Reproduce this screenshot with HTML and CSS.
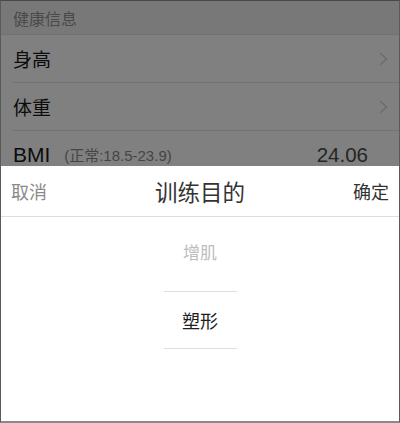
FILE: index.html
```html
<!DOCTYPE html>
<html lang="zh-CN">
<head>
<meta charset="utf-8">
<title>训练目的</title>
<link rel="stylesheet" href="styles.css">
</head>
<body>
<div class="frame">
  <div class="page">
    <div class="section-head">健康信息</div>
    <div class="rows">
      <div class="row">
        <span class="label">身高</span>
        <svg class="chev" width="9" height="14" viewBox="0 0 9 14"><path d="M1 1 L7.5 7 L1 13" fill="none" stroke="#6b6b6b" stroke-width="1.3"/></svg>
      </div>
      <div class="row">
        <span class="label">体重</span>
        <svg class="chev" width="9" height="14" viewBox="0 0 9 14"><path d="M1 1 L7.5 7 L1 13" fill="none" stroke="#6b6b6b" stroke-width="1.3"/></svg>
      </div>
      <div class="row last">
        <span class="label latin">BMI <span class="note">(正常:18.5-23.9)</span></span>
        <span class="value">24.06</span>
      </div>
    </div>
  </div>
  <div class="sheet">
    <div class="sheet-head">
      <span class="cancel">取消</span>
      <span class="title">训练目的</span>
      <span class="ok">确定</span>
    </div>
    <div class="picker">
      <div class="opt dim">增肌</div>
      <div class="opt sel">塑形</div>
    </div>
  </div>
</div>
</body>
</html>
```

FILE: styles.css
```css
html, body {
  margin: 0;
  padding: 0;
  background: #ffffff;
}
body {
  font-family: "Noto Sans CJK SC", "Liberation Sans", sans-serif;
}
.frame {
  width: 400px;
  height: 423px;
  box-sizing: border-box;
  border-top: 1px solid #4a4a4a;
  border-left: 1px solid #5a5a5a;
  border-right: 1px solid #5a5a5a;
  border-bottom: 2px solid #8a8a8a;
  display: flex;
  flex-direction: column;
  overflow: hidden;
}
.page {
  height: 165px;
  flex: none;
  overflow: hidden;
  background: #7f7f7f;
}
.section-head {
  height: 33px;
  background: #787878;
  border-bottom: 1px solid #717171;
  display: flex;
  align-items: center;
  padding-left: 12px;
  font-size: 16px;
  color: #4a4a4a;
}
.rows {
  background: #808080;
}
.row {
  height: 47px;
  margin-left: 12px;
  padding-right: 11px;
  border-bottom: 1px solid #727272;
  display: flex;
  align-items: center;
  justify-content: space-between;
}
.row.last {
  border-bottom: none;
}
.label {
  font-size: 19px;
  color: #0c0c0c;
}
.latin {
  font-family: "Liberation Sans", "Noto Sans CJK SC", sans-serif;
  font-size: 21px;
}
.note {
  font-family: "Liberation Sans", "Noto Sans CJK SC", sans-serif;
  font-size: 15px;
  color: #454545;
  margin-left: 8px;
  position: relative;
  top: -1px;
}
.value {
  font-family: "Liberation Sans", sans-serif;
  font-size: 20.5px;
  color: #262626;
  margin-right: 20px;
}
.chev {
  display: block;
}
.sheet {
  flex: 1;
  background: #ffffff;
  display: flex;
  flex-direction: column;
}
.sheet-head {
  height: 50px;
  border-bottom: 1px solid #dedede;
  display: flex;
  align-items: center;
  justify-content: space-between;
  padding: 0 10px;
}
.cancel {
  font-size: 18px;
  color: #8a8a8a;
}
.ok {
  font-size: 18px;
  color: #333333;
}
.title {
  font-size: 22.5px;
  color: #333333;
}
.picker {
  display: flex;
  flex-direction: column;
  align-items: center;
}
.opt {
  width: 73px;
  display: flex;
  align-items: center;
  justify-content: center;
  box-sizing: border-box;
}
.opt.dim {
  height: 74px;
  padding-bottom: 5px;
  font-size: 17px;
  color: #bdbdbd;
}
.opt.sel {
  height: 58px;
  border-top: 1px solid #dedede;
  border-bottom: 1px solid #dedede;
  font-size: 18px;
  color: #1e1e1e;
}
```
